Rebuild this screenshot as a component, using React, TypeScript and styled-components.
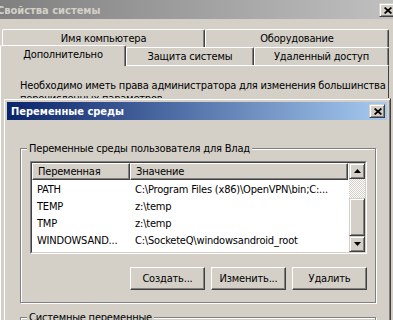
import React from 'react';
import styled, { createGlobalStyle } from 'styled-components';

const face = '#D4D0C8';
const shadow = '#808080';
const darkShadow = '#404040';
const highlight = '#FFFFFF';
const uiFont = `'DejaVu Sans Condensed', 'DejaVu Sans', 'Liberation Sans', sans-serif`;

const GlobalStyle = createGlobalStyle`
  html, body {
    margin: 0;
    padding: 0;
    background: ${ face };
  }
  * {
    box-sizing: border-box;
  }
`;

const userVars = [
  { name: 'PATH', value: 'C:\\Program Files (x86)\\OpenVPN\\bin;C:...' },
  { name: 'TEMP', value: 'z:\\temp' },
  { name: 'TMP', value: 'z:\\temp' },
  { name: 'WINDOWSAND...', value: 'C:\\SocketeQ\\windowsandroid_root' },
];

const CloseGlyph = () => (
  <svg width="8" height="7" viewBox="0 0 8 7">
    <path d="M0.6 0.5 L7.4 6.5 M7.4 0.5 L0.6 6.5" stroke="#000" strokeWidth="1.7" fill="none" />
  </svg>
);

const Arrow = ( { up }: { up?: boolean } ) => (
  <svg width="7" height="4" viewBox="0 0 7 4">
    { up
      ? <polygon points="3.5,0 7,4 0,4" fill="#000" />
      : <polygon points="0,0 7,0 3.5,4" fill="#000" /> }
  </svg>
);

export default function App() {
  return (
    <>
      <GlobalStyle />
      <Screen>
        <OuterWindow>
          <OuterTitle>
            <OuterTitleText>Свойства системы</OuterTitleText>
            <CaptionButton $edge={ -2 }><CloseGlyph /></CaptionButton>
          </OuterTitle>
          <Tabs>
            <TabRow $indent={ 2 }>
              <Tab $w={ 203 }>Имя компьютера</Tab>
              <Tab $w={ 184 }>Оборудование</Tab>
            </TabRow>
            <TabRow $indent={ 0 }>
              <Tab $w={ 126 } $active>Дополнительно</Tab>
              <Tab $w={ 128 }>Защита системы</Tab>
              <Tab $w={ 135 }>Удаленный доступ</Tab>
            </TabRow>
          </Tabs>
          <Panel>
            <PanelLine>Необходимо иметь права администратора для изменения большинства</PanelLine>
            <PanelLine>перечисленных параметров.</PanelLine>
          </Panel>
        </OuterWindow>

        <Dialog>
          <DialogTitle>
            <span>Переменные среды</span>
            <CaptionButton $edge={ 2 }><CloseGlyph /></CaptionButton>
          </DialogTitle>
          <DialogBody>
            <GroupBox>
              <Legend>Переменные среды пользователя для Влад</Legend>
              <ListView>
                <ListInner>
                  <ListMain>
                    <HeaderRow>
                      <HeaderCell $w={ 98 }>Переменная</HeaderCell>
                      <HeaderCell $w={ 218 }>Значение</HeaderCell>
                    </HeaderRow>
                    <Rows>
                      { userVars.map( v => (
                        <Row key={ v.name }>
                          <Cell $w={ 98 }>{ v.name }</Cell>
                          <Cell $w={ 218 }>{ v.value }</Cell>
                        </Row>
                      ) ) }
                    </Rows>
                  </ListMain>
                  <ScrollBar>
                    <ScrollButton><Arrow up /></ScrollButton>
                    <Track $h={ 19 } />
                    <Thumb />
                    <Track $h={ 0 } />
                    <ScrollButton><Arrow /></ScrollButton>
                  </ScrollBar>
                </ListInner>
              </ListView>
              <ButtonRow>
                <PushButton>Создать...</PushButton>
                <PushButton>Изменить...</PushButton>
                <PushButton>Удалить</PushButton>
              </ButtonRow>
            </GroupBox>
            <GroupBox $gap={ 8 }>
              <Legend>Системные переменные</Legend>
              <GroupFiller />
            </GroupBox>
          </DialogBody>
        </Dialog>
      </Screen>
    </>
  );
}

const Screen = styled.div`
  position: relative;
  width: 393px;
  height: 320px;
  overflow: hidden;
  background: ${ face };
  font-family: ${ uiFont };
  font-size: 11px;
  letter-spacing: -0.2px;
  color: #000;
`;

const OuterWindow = styled.div`
  display: flex;
  flex-direction: column;
  height: 100%;
`;

const OuterTitle = styled.div`
  display: flex;
  align-items: center;
  justify-content: space-between;
  height: 19px;
  padding-top: 1px;
  background: linear-gradient(to right, #808080, #c0c0c0);
`;

const OuterTitleText = styled.span`
  margin-left: -3px;
  font-weight: bold;
  letter-spacing: 0;
  color: ${ face };
`;

const CaptionButton = styled.div<{ $edge: number }>`
  display: flex;
  align-items: center;
  justify-content: center;
  width: 16px;
  height: 14px;
  margin-right: ${ p => p.$edge }px;
  padding-left: 1px;
  background: ${ face };
  border: 1px solid;
  border-color: ${ face } ${ darkShadow } ${ darkShadow } ${ face };
  box-shadow: inset 1px 1px ${ highlight }, inset -1px -1px ${ shadow };
`;

const Tabs = styled.div`
  display: flex;
  flex-direction: column;
  margin-top: 10px;
`;

const TabRow = styled.div<{ $indent: number }>`
  display: flex;
  align-items: flex-end;
  height: 18px;
  padding-left: ${ p => p.$indent }px;
`;

const Tab = styled.div<{ $w: number; $active?: boolean }>`
  position: relative;
  z-index: ${ p => p.$active ? 1 : 0 };
  display: flex;
  align-items: center;
  justify-content: center;
  width: ${ p => p.$w }px;
  height: ${ p => p.$active ? 21 : 18 }px;
  margin-bottom: ${ p => p.$active ? -1 : 0 }px;
  padding-bottom: ${ p => p.$active ? 3 : 0 }px;
  background: ${ face };
  border-top: 1px solid ${ highlight };
  border-left: 1px solid ${ highlight };
  border-right: 1px solid ${ darkShadow };
  border-top-left-radius: 2px;
  border-top-right-radius: 2px;
  box-shadow: inset -1px 0 ${ shadow };
  white-space: nowrap;
`;

const Panel = styled.div`
  flex: 1;
  width: 389px;
  padding: 13px 0 0 19px;
  border-top: 1px solid ${ highlight };
  border-left: 1px solid ${ highlight };
  border-right: 1px solid ${ darkShadow };
`;

const PanelLine = styled.div`
  line-height: 13px;
  white-space: nowrap;
`;

const Dialog = styled.div`
  position: absolute;
  left: 3px;
  top: 98px;
  width: 388px;
  height: 260px;
  padding: 3px;
  background: ${ face };
  border: 1px solid;
  border-color: ${ face } ${ darkShadow } ${ darkShadow } ${ face };
  box-shadow: inset 1px 1px ${ highlight }, inset -1px -1px ${ shadow };
`;

const DialogTitle = styled.div`
  display: flex;
  align-items: center;
  justify-content: space-between;
  height: 18px;
  padding-left: 4px;
  background: linear-gradient(to right, #0a246a, #a6caf0);
  color: #fff;
  font-weight: bold;
  letter-spacing: 0;
`;

const DialogBody = styled.div`
  display: flex;
  flex-direction: column;
  padding: 22px 11px 0 13px;
`;

const GroupBox = styled.fieldset<{ $gap?: number }>`
  margin: ${ p => p.$gap ?? 0 }px 0 0 0;
  min-width: 0;
  padding: 6px 8px 12px 9px;
  border: 1px solid ${ shadow };
  box-shadow: 1px 1px 0 ${ highlight }, inset 1px 1px 0 ${ highlight };
`;

const Legend = styled.legend`
  margin-left: -3px;
  padding: 0 2px;
  line-height: 13px;
  background: ${ face };
`;

const ListView = styled.div`
  height: 93px;
  border: 1px solid;
  border-color: ${ shadow } ${ highlight } ${ highlight } ${ shadow };
`;

const ListInner = styled.div`
  display: flex;
  height: 100%;
  background: #fff;
  border: 1px solid;
  border-color: ${ darkShadow } ${ face } ${ face } ${ darkShadow };
`;

const ListMain = styled.div`
  flex: 1;
  display: flex;
  flex-direction: column;
  min-width: 0;
`;

const HeaderRow = styled.div`
  display: flex;
  height: 17px;
`;

const HeaderCell = styled.div<{ $w: number }>`
  display: flex;
  align-items: center;
  width: ${ p => p.$w }px;
  padding-left: 5px;
  background: ${ face };
  border-top: 1px solid ${ highlight };
  border-left: 1px solid ${ highlight };
  border-right: 1px solid ${ darkShadow };
  border-bottom: 1px solid ${ darkShadow };
  box-shadow: inset -1px -1px ${ shadow };
`;

const Rows = styled.div`
  display: flex;
  flex-direction: column;
  padding-top: 1px;
`;

const Row = styled.div`
  display: flex;
  height: 17px;
  align-items: center;
`;

const Cell = styled.div<{ $w: number }>`
  width: ${ p => p.$w }px;
  padding-left: 5px;
  white-space: nowrap;
  overflow: hidden;
`;

const ScrollBar = styled.div`
  display: flex;
  flex-direction: column;
  width: 16px;
`;

const ScrollButton = styled.div`
  display: flex;
  align-items: center;
  justify-content: center;
  height: 16px;
  background: ${ face };
  border: 1px solid;
  border-color: ${ face } ${ darkShadow } ${ darkShadow } ${ face };
  box-shadow: inset 1px 1px ${ highlight }, inset -1px -1px ${ shadow };
`;

const Track = styled.div<{ $h: number }>`
  height: ${ p => p.$h }px;
  flex: ${ p => p.$h ? 'none' : 1 };
  background-image: conic-gradient(${ highlight } 25%, ${ face } 0 50%, ${ highlight } 0 75%, ${ face } 0);
  background-size: 2px 2px;
`;

const Thumb = styled(ScrollButton)`
  height: 38px;
`;

const ButtonRow = styled.div`
  display: flex;
  justify-content: flex-end;
  gap: 6px;
  margin-top: 13px;
`;

const PushButton = styled.div`
  display: flex;
  align-items: center;
  justify-content: center;
  width: 75px;
  height: 23px;
  background: ${ face };
  border: 1px solid;
  border-color: ${ highlight } ${ darkShadow } ${ darkShadow } ${ highlight };
  box-shadow: inset -1px -1px ${ shadow };
`;

const GroupFiller = styled.div`
  height: 100px;
`;
